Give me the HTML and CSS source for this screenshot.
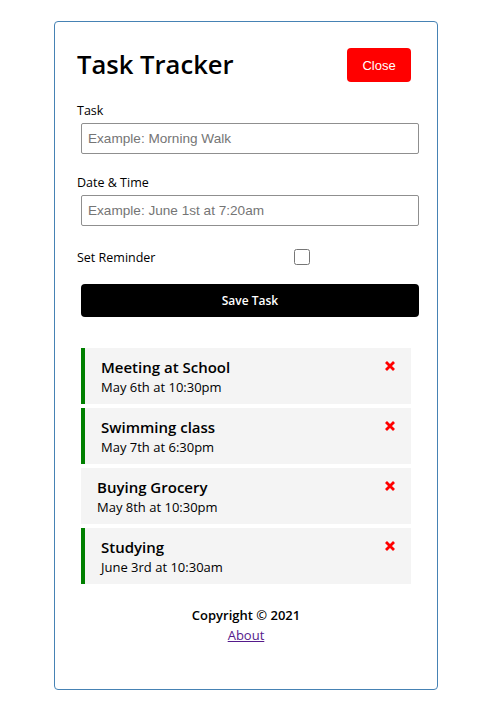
FILE: index.html
```html
<!DOCTYPE html>
<html lang="en">
<head>
<meta charset="utf-8">
<title>Task Tracker</title>
<link rel="stylesheet" href="styles.css">
</head>
<body>
<div class="container">
  <header class="header">
    <h1 class="title">Task Tracker</h1>
    <button class="btn btn-close">Close</button>
  </header>
  <form class="add-form">
    <div class="form-control">
      <label>Task</label>
      <input type="text" placeholder="Example: Morning Walk">
    </div>
    <div class="form-control">
      <label>Date &amp; Time</label>
      <input type="text" placeholder="Example: June 1st at 7:20am">
    </div>
    <div class="form-control form-control-check">
      <label>Set Reminder</label>
      <div class="check-wrap"><input type="checkbox" class="check"></div>
    </div>
    <button type="button" class="btn btn-block">Save Task</button>
  </form>
  <div class="tasks">
    <div class="task reminder">
      <h3>Meeting at School <svg class="del" width="10" height="10" viewBox="0 0 10 10"><path d="M1 1L9 9M9 1L1 9" stroke="#f00" stroke-width="2.8"/></svg></h3>
      <p>May 6th at 10:30pm</p>
    </div>
    <div class="task reminder">
      <h3>Swimming class <svg class="del" width="10" height="10" viewBox="0 0 10 10"><path d="M1 1L9 9M9 1L1 9" stroke="#f00" stroke-width="2.8"/></svg></h3>
      <p>May 7th at 6:30pm</p>
    </div>
    <div class="task">
      <h3>Buying Grocery <svg class="del" width="10" height="10" viewBox="0 0 10 10"><path d="M1 1L9 9M9 1L1 9" stroke="#f00" stroke-width="2.8"/></svg></h3>
      <p>May 8th at 10:30pm</p>
    </div>
    <div class="task reminder">
      <h3>Studying <svg class="del" width="10" height="10" viewBox="0 0 10 10"><path d="M1 1L9 9M9 1L1 9" stroke="#f00" stroke-width="2.8"/></svg></h3>
      <p>June 3rd at 10:30am</p>
    </div>
  </div>
  <footer class="footer">
    <p>Copyright &copy; 2021</p>
    <a href="#about" class="about">About</a>
  </footer>
</div>
</body>
</html>
```

FILE: styles.css
```css
* { box-sizing: border-box; }

body {
  margin: 0;
  font-family: "Open Sans", "Noto Sans", sans-serif;
  color: #000;
  background: #fff;
}

.container {
  width: 384px;
  margin: 21px 0 0 54px;
  border: 1px solid steelblue;
  border-radius: 4px;
  padding: 22px;
}

.header {
  display: flex;
  justify-content: space-between;
  align-items: center;
  margin-bottom: 16px;
}

.title {
  margin: 0;
  font-size: 25.6px;
  font-weight: 600;
  line-height: 34px;
}

.btn {
  display: inline-block;
  background: #000;
  color: #fff;
  border: none;
  border-radius: 4px;
  margin: 4px;
  padding: 0 16px;
  height: 34px;
  font-family: inherit;
  font-size: 12px;
  font-weight: 600;
  cursor: pointer;
}

.btn-close {
  background: #f00;
  font-family: "Liberation Sans", Arial, sans-serif;
  font-weight: 400;
  font-size: 13px;
  width: 64px;
  padding: 0;
}

.btn-block {
  display: block;
  width: 100%;
  height: 33px;
  margin: 0 0 0 4px;
}

.add-form {
  margin-bottom: 31px;
}

.form-control {
  margin: 16px 0 20px;
}

.form-control label {
  display: block;
  font-size: 12.5px;
  line-height: 17px;
}

.form-control input[type="text"] {
  display: block;
  width: 100%;
  height: 31px;
  margin: 4px 0 0 4px;
  padding: 0 6px;
  border: 1px solid #8f8f8f;
  border-radius: 2px;
  font-family: "Liberation Sans", Arial, sans-serif;
  font-size: 13.6px;
}

.form-control input::placeholder {
  color: #757575;
}

.form-control-check {
  display: flex;
  align-items: center;
  height: 22px;
  margin-bottom: 16px;
}

.form-control-check label {
  flex: 1;
}

.check-wrap {
  flex: 2;
  display: flex;
  justify-content: center;
}

.check {
  width: 16px;
  height: 16px;
  margin: 0;
}

.task {
  background: #f4f4f4;
  margin: 4px;
  padding: 8px 16px;
  height: 56px;
}

.task.reminder {
  border-left: 4px solid green;
}

.task h3 {
  display: flex;
  justify-content: space-between;
  align-items: center;
  margin: 0;
  font-size: 15px;
  font-weight: 600;
  line-height: 22px;
}

.del {
  display: block;
  margin-top: -2px;
}

.task p {
  margin: 0;
  font-size: 13px;
  line-height: 18px;
}

.footer {
  margin-top: 21px;
  padding-bottom: 22px;
  text-align: center;
  font-size: 13px;
  line-height: 20px;
}

.footer p {
  margin: 0;
  font-weight: 600;
}

.about {
  color: #551a8b;
}
```
